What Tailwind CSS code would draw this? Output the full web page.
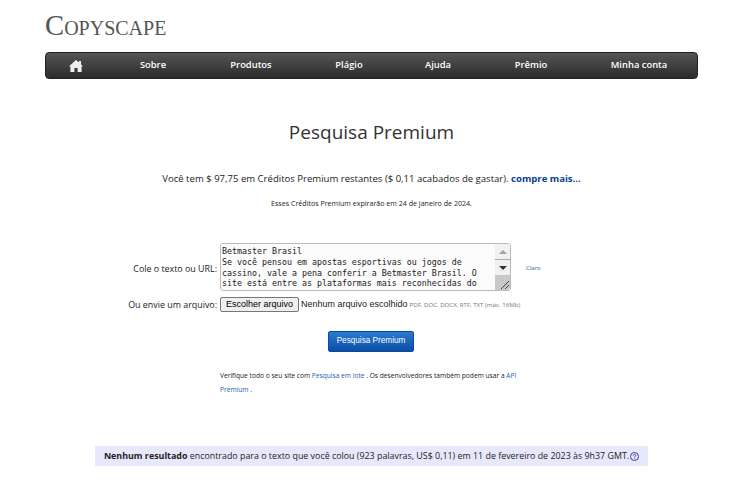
<!DOCTYPE html>
<html lang="en">
<head>
    <meta charset="UTF-8">
    <title>Pesquisa Premium - Copyscape</title>
    <script src="https://cdn.jsdelivr.net/npm/@tailwindcss/browser@4"></script>
</head>
<body class="bg-white h-[485px] overflow-hidden font-['Open_Sans',sans-serif] text-[#222]">
    <div class="ml-[45px] w-[653px]">
        <div class="h-[52px] pt-[7px] font-['Liberation_Serif',serif] text-[#555] text-[28.7px] leading-[36px] [font-variant:small-caps]">Copyscape</div>

        <nav class="h-[27px] flex items-center rounded-[4px] border border-[#222] bg-gradient-to-b from-[#555] to-[#2c2c2c] text-white text-[9.4px] font-semibold">
            <a class="w-[60px] flex justify-center">
                <svg width="14" height="12" viewBox="0 0 14 12" fill="#eee"><path d="M7 0 L10 2.6 V1 H12 V4.4 L14 6.2 L12.6 6.4 V12 H8.6 V8 H5.4 V12 H1.4 V6.4 L0 6.2 Z"/></svg>
            </a>
            <a class="w-[94px] text-center">Sobre</a>
            <a class="w-[102px] text-center">Produtos</a>
            <a class="w-[94px] text-center">Plágio</a>
            <a class="w-[84px] text-center">Ajuda</a>
            <a class="w-[102px] text-center">Prêmio</a>
            <a class="w-[114px] text-center">Minha conta</a>
        </nav>

        <h1 class="mt-[39px] text-center text-[19px] leading-[28px] text-[#333]">Pesquisa Premium</h1>
        <p class="mt-[25px] text-center text-[9.55px] leading-[16px]">Você tem $ 97,75 em Créditos Premium restantes ($ 0,11 acabados de gastar). <a class="font-bold text-[#0b3d91]">compre mais...</a></p>
        <p class="mt-[9px] text-center text-[7.1px] leading-[14px]">Esses Créditos Premium expirarão em 24 de janeiro de 2024.</p>

        <div class="mt-[33px] flex items-center">
            <label class="w-[175px] text-right text-[8.9px] pr-[3px] pt-[4px]">Cole o texto ou URL:</label>
            <div class="relative w-[291px] h-[48px] border border-[#bbb] rounded-[3px] overflow-hidden">
                <div class="h-full pl-[1px] pt-[2px] pr-[16px] font-['DejaVu_Sans_Mono',monospace] text-[8.3px] leading-[10.8px] text-[#222] bg-[#fbfbfb]">Betmaster Brasil<br>Se você pensou em apostas esportivas ou jogos de<br>cassino, vale a pena conferir a Betmaster Brasil. O<br>site está entre as plataformas mais reconhecidas do</div>
                <div class="absolute right-0 top-0 bottom-0 w-[15px] bg-[#f1f1f1] flex flex-col items-center">
                    <div class="h-[15px] flex items-center"><div class="w-0 h-0 border-x-[4px] border-x-transparent border-b-[4px] border-b-[#a3a3a3]"></div></div>
                    <div class="w-full h-[16px] flex items-center justify-center border-t border-[#aaa]"><div class="w-0 h-0 border-x-[4px] border-x-transparent border-t-[4px] border-t-[#333]"></div></div>
                    <div class="w-full flex-1 bg-[#c8c8c8] flex items-end justify-end">
                        <svg width="11" height="11" viewBox="0 0 11 11" stroke="#444" fill="none"><path d="M2 10 L10 2 M6 10 L10 6"/></svg>
                    </div>
                </div>
            </div>
            <a class="ml-[15px] pt-[3px] text-[6px] text-[#1f5fb0]">Claro</a>
        </div>

        <div class="mt-[6px] flex items-center h-[15px] whitespace-nowrap">
            <label class="w-[175px] text-right text-[8.9px] pr-[3px]">Ou envie um arquivo:</label>
            <button class="h-[15px] w-[79px] border border-[#767676] rounded-[2px] bg-[#efefef] font-['Liberation_Sans',sans-serif] text-[9px] leading-[13px] text-black">Escolher arquivo</button>
            <span class="ml-[2px] font-['Liberation_Sans',sans-serif] text-[9px] text-[#222]">Nenhum arquivo escolhido</span>
            <span class="ml-[2px] text-[6.1px] text-[#777]">PDF, DOC, DOCX, RTF, TXT (máx. 16Mb)</span>
        </div>

        <div class="mt-[19px] flex justify-center pr-[1px]">
            <button class="w-[86px] h-[21px] rounded-[2px] bg-gradient-to-b from-[#2a7ad2] to-[#0b4ea6] border border-[#0a4a9c] font-['Liberation_Sans',sans-serif] text-[8.2px] text-white">Pesquisa Premium</button>
        </div>

        <p class="mt-[17px] ml-[175px] w-[300px] text-[6.65px] leading-[14px] text-[#222]">Verifique todo o seu site com <a class="text-[#1f5fb0]">Pesquisa em lote</a> . Os desenvolvedores também podem usar a <a class="text-[#1f5fb0]">API Premium</a> .</p>

        <div class="mt-[49px] ml-[50px] w-[553px] h-[20px] bg-[#e8e8fd] flex items-center justify-center text-[8.9px] text-[#222] whitespace-nowrap">
            <span><b class="font-bold">Nenhum resultado</b> encontrado para o texto que você colou (923 palavras, US$ 0,11) em 11 de fevereiro de 2023 às 9h37 GMT.</span>
            <svg class="ml-[1px]" width="9" height="9" viewBox="0 0 9 9" fill="none" stroke="#3b3bb5"><circle cx="4.5" cy="4.5" r="4"/><path d="M3.2 3.6 C3.4 2 5.8 2 5.8 3.4 C5.8 4.4 4.5 4.4 4.5 5.4 M4.5 6.2 V7" stroke-width="0.9"/></svg>
        </div>
    </div>
</body>
</html>
